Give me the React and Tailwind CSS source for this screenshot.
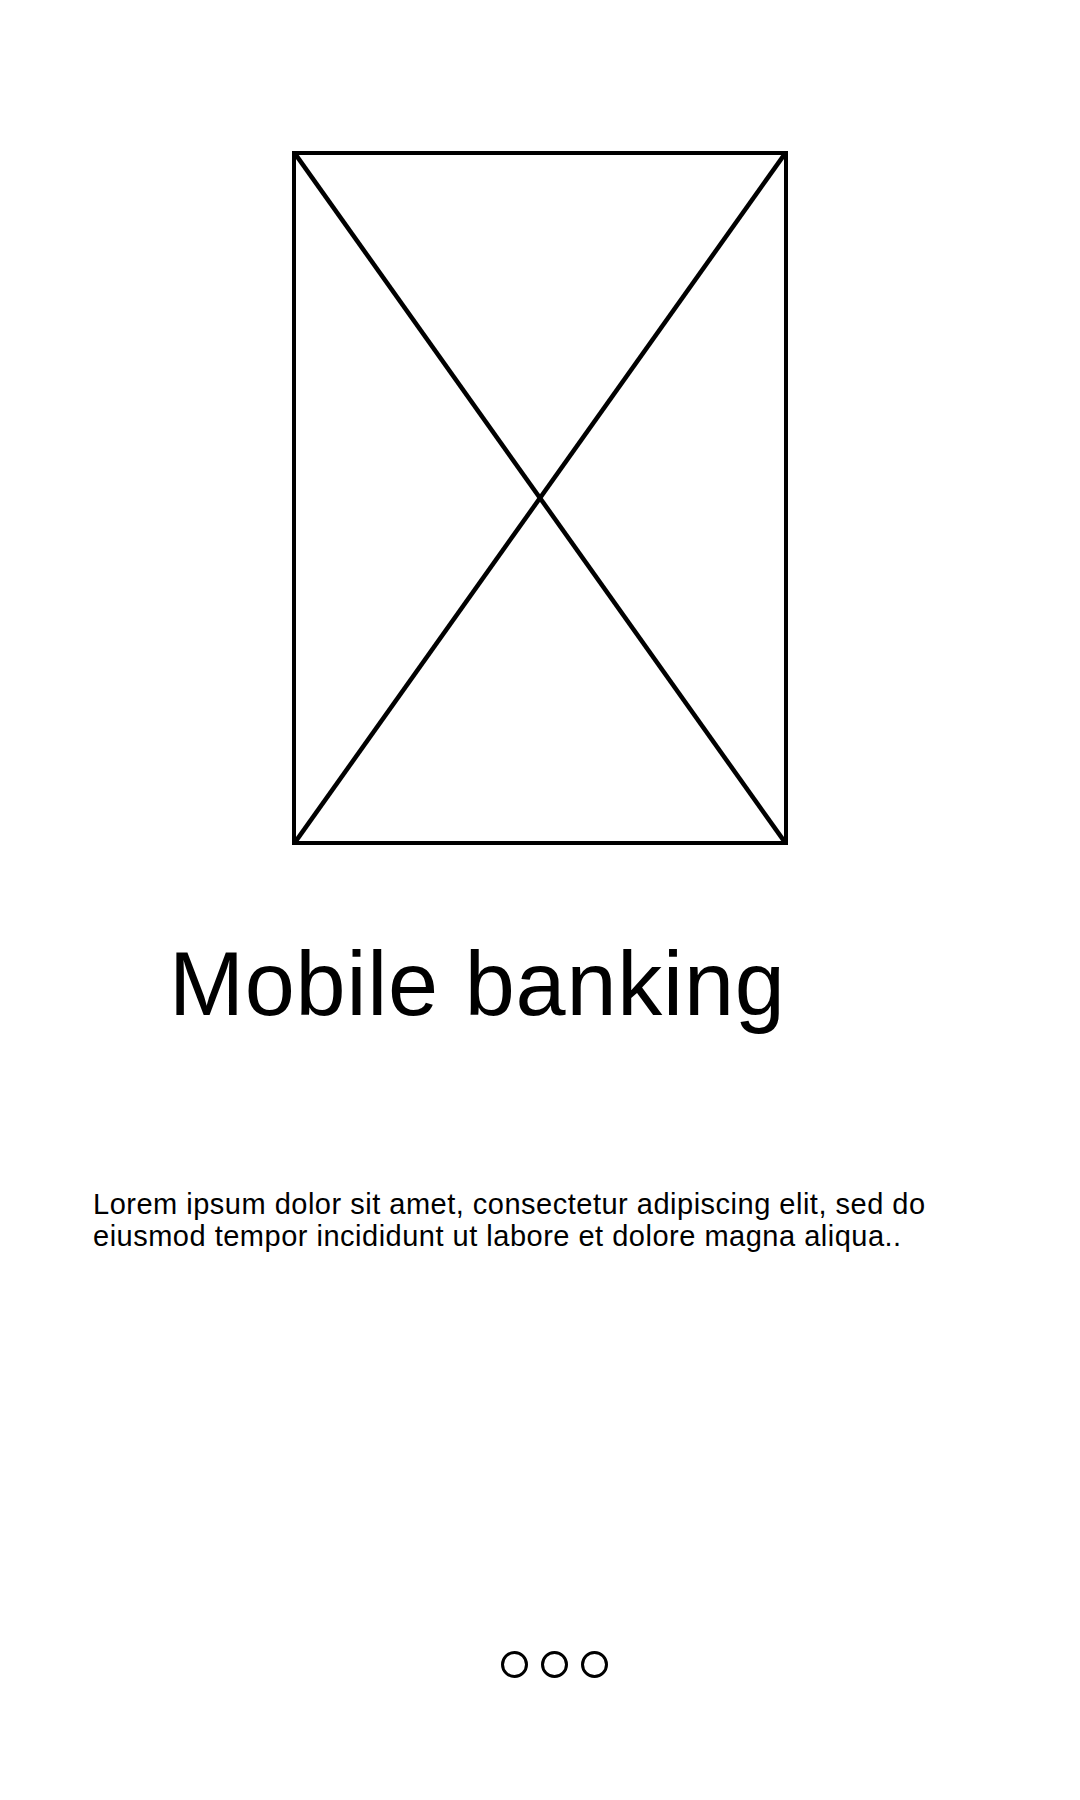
export default function App() {
  return (
    <div className="w-[1080px] h-[1800px] bg-white flex flex-col" style={{ fontFamily: '"Liberation Sans", Arial, sans-serif' }}>
      <div className="mt-[151px] mx-auto w-[496px] h-[694px] border-4 border-black relative">
        <svg className="absolute inset-0 w-full h-full" viewBox="0 0 488 686" preserveAspectRatio="none">
          <line x1="0" y1="0" x2="488" y2="686" stroke="black" strokeWidth="4.5" />
          <line x1="488" y1="0" x2="0" y2="686" stroke="black" strokeWidth="4.5" />
        </svg>
      </div>
      <div className="mt-[94px] pl-[169px] text-[90px] leading-[90px] tracking-[0.8px] text-black">
        Mobile banking
      </div>
      <p className="mt-[159px] pl-[93px] text-[29px] leading-[32px] tracking-[0.5px] text-black">
        Lorem ipsum dolor sit amet, consectetur adipiscing elit, sed do
        <br />
        eiusmod tempor incididunt ut labore et dolore magna aliqua..
      </p>
      <div className="mt-[399px] pl-[501px] flex gap-[13px]">
        <div className="w-[27px] h-[27px] rounded-full border-[3px] border-black" />
        <div className="w-[27px] h-[27px] rounded-full border-[3px] border-black" />
        <div className="w-[27px] h-[27px] rounded-full border-[3px] border-black" />
      </div>
    </div>
  );
}
